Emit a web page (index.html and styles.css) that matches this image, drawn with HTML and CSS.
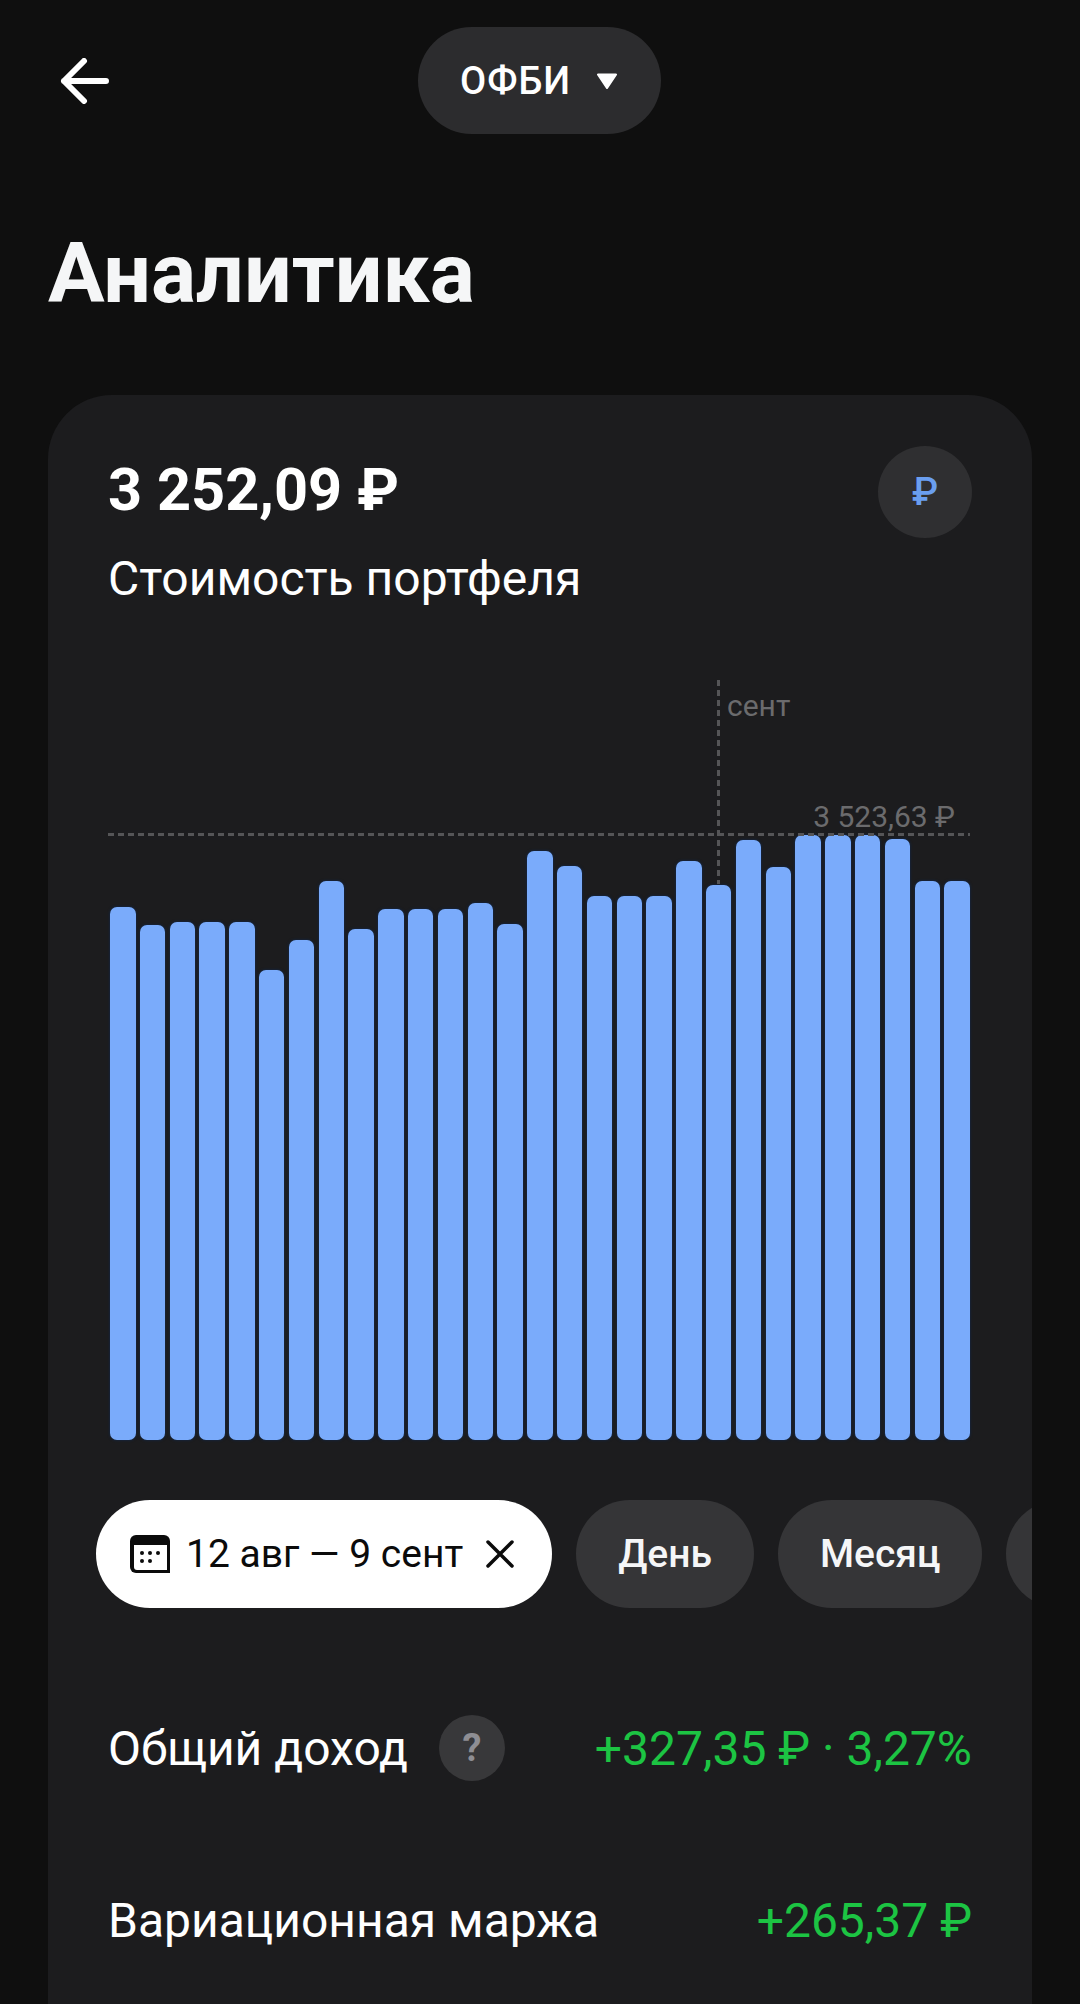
FILE: index.html
```html
<!DOCTYPE html>
<html lang="ru">
<head>
  <meta charset="UTF-8">
  <meta name="viewport" content="width=device-width, initial-scale=1.0">
  <title>Аналитика</title>
  <link rel="stylesheet" href="styles.css">
</head>
<body>
  <!-- Top bar -->
  <header class="topbar">
    <button class="back-button" aria-label="Назад">
      <svg width="50" height="46" viewBox="0 0 50 46" fill="none" stroke="#fff" stroke-width="6" stroke-linecap="round" stroke-linejoin="round">
        <path d="M46 23H4M24 3L4 23l20 20"/>
      </svg>
    </button>
    <button class="ticker-pill">
      <span>ОФБИ</span>
      <svg width="22" height="18" viewBox="0 0 22 18"><path d="M2 1.500h18a1 1 0 0 1 .9 1.500l-9 13.500a1 1 0 0 1-1.800 0L1.100 3a1 1 0 0 1 .9-1.500z" fill="#fff"/></svg>
    </button>
  </header>

  <h1 class="page-title">Аналитика</h1>

  <!-- Portfolio card -->
  <main class="card">
    <div class="card-head">
      <div>
        <div class="total">3 252,09 ₽</div>
        <div class="total-label">Стоимость портфеля</div>
      </div>
      <div class="currency-badge">₽</div>
    </div>

    <div class="chart">
      <div class="month-line"></div>
      <div class="month-label">сент</div>
      <div class="max-line"></div>
      <div class="max-label">3 523,63 ₽</div>
      <div class="bars">
        <div class="bar" style="height: 533px"></div>
        <div class="bar" style="height: 515px"></div>
        <div class="bar" style="height: 518px"></div>
        <div class="bar" style="height: 518px"></div>
        <div class="bar" style="height: 518px"></div>
        <div class="bar" style="height: 470px"></div>
        <div class="bar" style="height: 500px"></div>
        <div class="bar" style="height: 559px"></div>
        <div class="bar" style="height: 511px"></div>
        <div class="bar" style="height: 531px"></div>
        <div class="bar" style="height: 531px"></div>
        <div class="bar" style="height: 531px"></div>
        <div class="bar" style="height: 537px"></div>
        <div class="bar" style="height: 516px"></div>
        <div class="bar" style="height: 589px"></div>
        <div class="bar" style="height: 574px"></div>
        <div class="bar" style="height: 544px"></div>
        <div class="bar" style="height: 544px"></div>
        <div class="bar" style="height: 544px"></div>
        <div class="bar" style="height: 579px"></div>
        <div class="bar" style="height: 555px"></div>
        <div class="bar" style="height: 600px"></div>
        <div class="bar" style="height: 573px"></div>
        <div class="bar" style="height: 605px"></div>
        <div class="bar" style="height: 605px"></div>
        <div class="bar" style="height: 605px"></div>
        <div class="bar" style="height: 601px"></div>
        <div class="bar" style="height: 559px"></div>
        <div class="bar" style="height: 559px"></div>
      </div>
    </div>

    <!-- Period chips -->
    <div class="chips">
      <div class="chip chip-active">
        <svg class="calendar-icon" width="40" height="38" viewBox="0 0 40 38">
          <path d="M6 0h28a6 6 0 0 1 6 6v32H6a6 6 0 0 1-6-6V6a6 6 0 0 1 6-6z" fill="#0b0b0b"/>
          <path d="M4 10h33v25H7a3 3 0 0 1-3-3z" fill="#fff"/>
          <g fill="#0b0b0b">
            <circle cx="12" cy="18" r="2"/><circle cx="20" cy="18" r="2"/><circle cx="28" cy="18" r="2"/>
            <circle cx="12" cy="26" r="2"/><circle cx="20" cy="26" r="2"/>
          </g>
        </svg>
        <span>12 авг — 9 сент</span>
        <svg class="close-icon" width="28" height="28" viewBox="0 0 28 28" stroke="#0b0b0b" stroke-width="3.500" stroke-linecap="round">
          <path d="M2 2l24 24M26 2L2 26"/>
        </svg>
      </div>
      <div class="chip">День</div>
      <div class="chip">Месяц</div>
      <div class="chip chip-next"></div>
    </div>

    <!-- Income rows -->
    <div class="stat-row">
      <div class="stat-name">
        <span>Общий доход</span>
        <span class="help-badge">?</span>
      </div>
      <div class="stat-value">+327,35 ₽ · 3,27%</div>
    </div>
    <div class="stat-row">
      <div class="stat-name"><span>Вариационная маржа</span></div>
      <div class="stat-value">+265,37 ₽</div>
    </div>
  </main>
</body>
</html>
```

FILE: styles.css
```css
body {
  margin: 0;
  height: 2004px;
  overflow: hidden;
  background-color: #0f0f0f;
  color: #fff;
  font-family: Roboto, "Noto Sans", sans-serif;
}

.topbar {
  display: flex;
  align-items: center;
  height: 107px;
  padding: 27px 0 0 60px;
}

.back-button {
  display: flex;
  padding: 0;
  border: none;
  background: none;
}

.ticker-pill {
  display: flex;
  align-items: center;
  gap: 25px;
  height: 107px;
  margin-left: 308px;
  padding: 0 43px 0 42px;
  border: none;
  border-radius: 54px;
  background-color: #2c2c2e;
  color: #fff;
  font-family: inherit;
  font-size: 38px;
  font-weight: 500;
  letter-spacing: 1px;
}

.page-title {
  margin: 93px 0 0 48px;
  font-size: 84.300px;
  font-weight: 700;
  line-height: 94px;
  color: #f5f6f7;
}

.card {
  height: 1620px;
  margin: 74px 48px 0;
  padding: 51px 0 0;
  border-radius: 64px 64px 0 0;
  background-color: #1c1c1e;
}

.card-head {
  display: flex;
  justify-content: space-between;
  padding: 0 60px;
}

.total {
  padding-top: 1px;
  font-size: 59.500px;
  font-weight: 700;
  line-height: 87px;
}

.total-label {
  margin-top: 17px;
  font-size: 48px;
  line-height: 56px;
}

.currency-badge {
  display: flex;
  justify-content: center;
  align-items: center;
  width: 94px;
  height: 92px;
  border-radius: 50%;
  background-color: #2f2f31;
  color: #6a9eef;
  font-size: 38px;
  font-weight: 500;
}

.chart {
  position: relative;
  height: 760px;
  margin: 73px 62px 0 62px;
}

.bars {
  position: absolute;
  left: 0;
  right: 0;
  bottom: 0;
  display: flex;
  justify-content: space-between;
  align-items: flex-end;
}

.bar {
  width: 25.500px;
  border-radius: 7px;
  background-color: #7aabfb;
  box-shadow: 0 0 3px #0f2a55;
}

.month-line {
  position: absolute;
  z-index: 1;
  top: 0;
  left: 607px;
  width: 3px;
  height: 204px;
  background: repeating-linear-gradient(to bottom, #555557 0 6px, transparent 6px 10px);
}

.month-label {
  position: absolute;
  top: 8px;
  left: 617px;
  font-size: 30px;
  line-height: 36px;
  color: #6b6b6d;
}

.max-line {
  position: absolute;
  z-index: 1;
  top: 153px;
  left: -2px;
  right: 0;
  height: 3px;
  background: repeating-linear-gradient(to right, #555557 0 6px, transparent 6px 10px);
}

.max-label {
  position: absolute;
  top: 119px;
  right: 15px;
  font-size: 30px;
  line-height: 36px;
  color: #6b6b6d;
}

.chips {
  display: flex;
  gap: 24px;
  margin-top: 60px;
  padding-left: 48px;
  overflow: hidden;
}

.chip {
  display: flex;
  flex: none;
  align-items: center;
  height: 108px;
  padding: 0 42px;
  border-radius: 54px;
  background-color: #353537;
  color: #f5f6f7;
  font-size: 39px;
  font-weight: 500;
}

.chip-active {
  padding: 0 38px 0 34px;
  background-color: #fff;
  color: #0b0b0b;
  font-weight: 400;
}

.chip-next {
  width: 120px;
}

.calendar-icon {
  margin-right: 16px;
}

.close-icon {
  margin-left: 23px;
}

.stat-row {
  display: flex;
  justify-content: space-between;
  align-items: center;
  height: 66px;
  padding: 0 60px;
  font-size: 48px;
}

.chips + .stat-row {
  margin-top: 107px;
}

.stat-row + .stat-row {
  margin-top: 106px;
}

.stat-name {
  display: flex;
  align-items: center;
  gap: 31px;
}

.help-badge {
  display: flex;
  justify-content: center;
  align-items: center;
  width: 66px;
  height: 66px;
  border-radius: 50%;
  background-color: #38383a;
  color: #8e8e93;
  font-size: 38px;
  font-weight: 700;
}

.stat-value {
  color: #1cc443;
}
```
